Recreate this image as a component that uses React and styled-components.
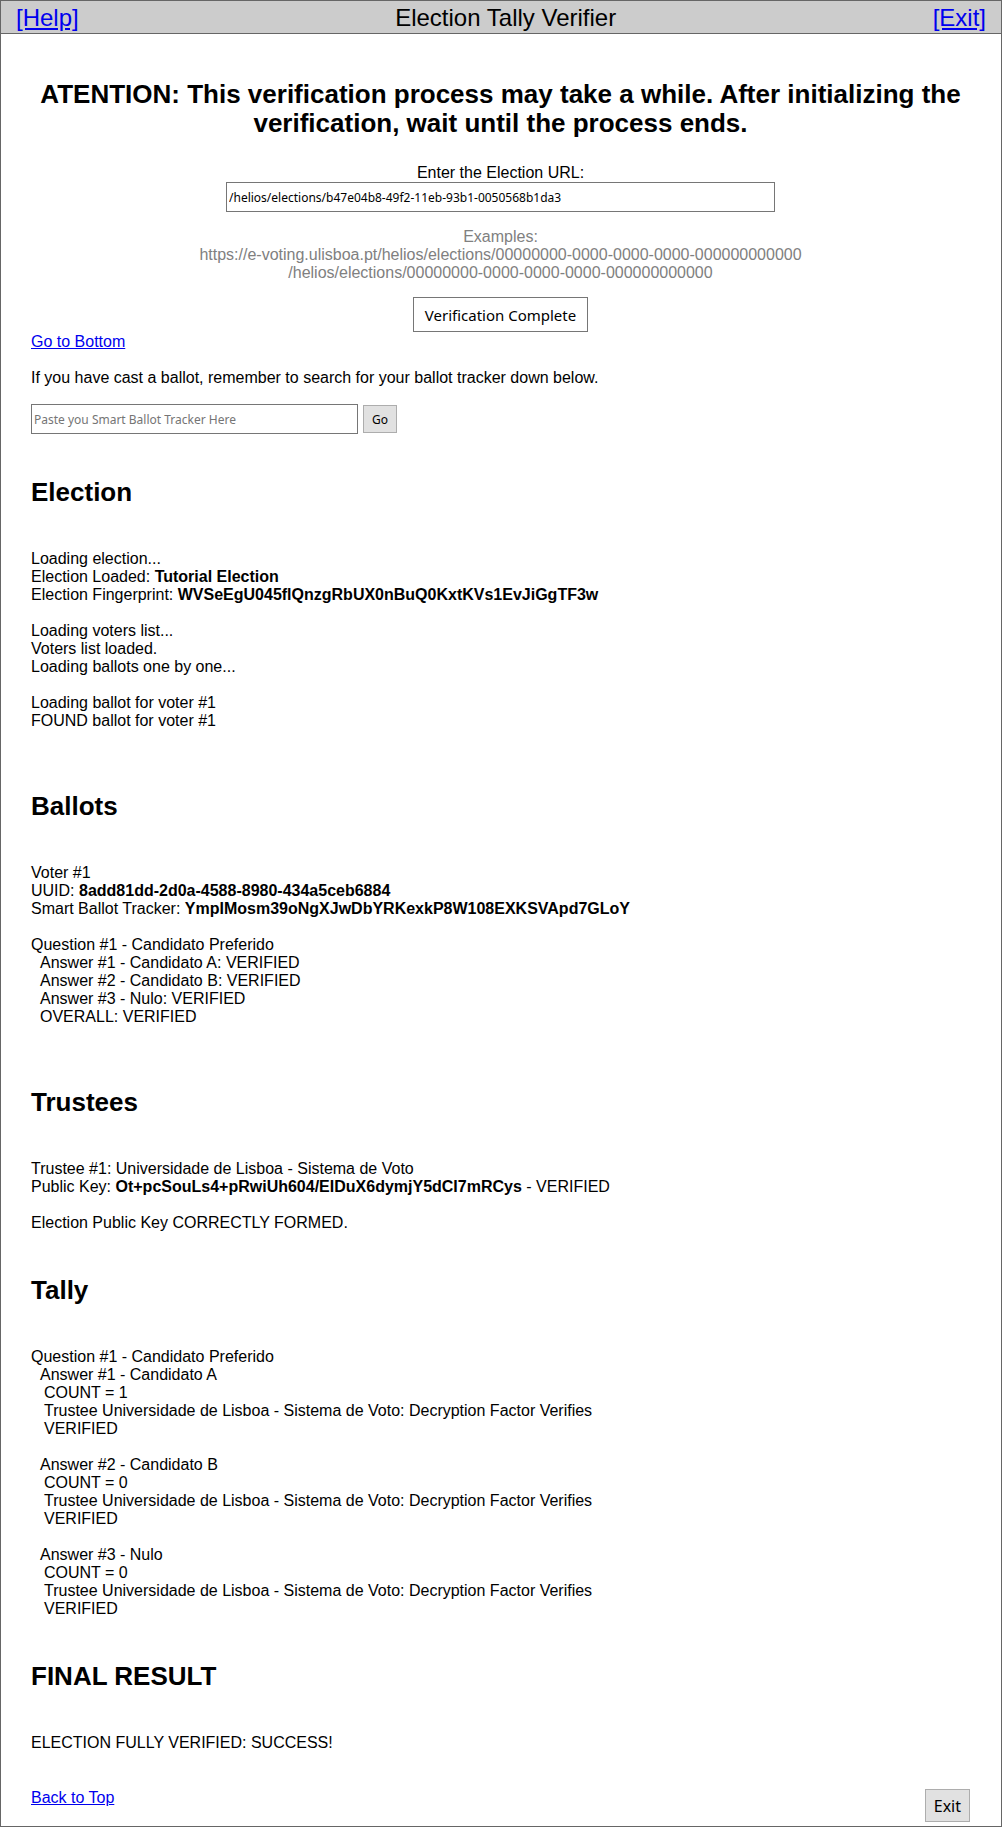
import React from "react";
import styled, { createGlobalStyle } from "styled-components";

const GlobalStyle = createGlobalStyle`
  *, *::before, *::after { box-sizing: border-box; }
  body {
    margin: 0;
    background: #fff;
    color: #000;
    font-family: "Liberation Sans", Arial, sans-serif;
    font-size: 16px;
    line-height: 18px;
  }
`;

const controlFont = `"Noto Sans", Tahoma, sans-serif`;

const Page = styled.div`
  border: 1px solid #666;
`;

const Header = styled.header`
  display: flex;
  justify-content: space-between;
  align-items: center;
  padding: 3px 15px 2px;
  border-bottom: 1px solid #666;
  background: #ccc;
  font-size: 24px;
  line-height: 27px;
`;

const Title = styled.h1`
  margin: 0;
  font-size: inherit;
  font-weight: normal;
`;

const Link = styled.a`
  color: #00e;
  text-decoration: underline;
`;

const Main = styled.main`
  padding: 46px 31px 4px 30px;
`;

const Heading = styled.h2`
  margin: 0;
  font-size: 26px;
  line-height: 29px;
  text-align: ${(p) => (p.$center ? "center" : "left")};
`;

const VerifyForm = styled.form`
  display: flex;
  flex-direction: column;
  align-items: center;
  margin: 26px 0 1px;
`;

const TextBox = styled.input`
  width: ${(p) => p.$width};
  max-width: 100%;
  height: 30px;
  padding: 0 2px;
  border: 1px solid #767676;
  background: #fff;
  color: #000;
  font-family: ${controlFont};
  font-size: 12px;
  &::placeholder { color: #757575; opacity: 1; }
`;

const Examples = styled.p`
  margin: 16px 0 15px;
  color: #808080;
  text-align: center;
`;

const Button = styled.button`
  height: ${(p) => (p.$small ? 28 : 33)}px;
  padding: 0 8px;
  border: 1px solid #adadad;
  background: #e1e1e1;
  color: #000;
  font-family: ${controlFont};
  font-size: ${(p) => (p.$small ? 12 : 16)}px;
`;

const StatusButton = styled(Button)`
  height: 35px;
  padding: 0 11px;
  border-color: #767676;
  background: #fff;
  font-size: 15px;
`;

const Paragraph = styled.p`
  margin: 18px 0 17px;
`;

const TrackerForm = styled.form`
  display: flex;
  align-items: center;
  gap: 5px;
`;

const Section = styled.section`
  margin-top: ${(p) => (p.$wide ? 62 : 44)}px;
`;

const Log = styled.div`
  display: flex;
  flex-direction: column;
  gap: 18px;
  margin-top: 43px;
`;

const Line = styled.div`
  padding-left: ${(p) => [0, 9, 13][p.$level || 0]}px;
`;

const Footer = styled.footer`
  display: flex;
  justify-content: space-between;
  align-items: flex-start;
  margin-top: 37px;
`;

const tally = [
  { name: "Candidato A", count: 1 },
  { name: "Candidato B", count: 0 },
  { name: "Nulo", count: 0 },
];

export default function App() {
  const stop = (e) => e.preventDefault();
  return (
    <>
      <GlobalStyle />
      <Page id="top">
        <Header>
          <Link href="#help">[Help]</Link>
          <Title>Election Tally Verifier</Title>
          <Link href="#exit">[Exit]</Link>
        </Header>
        <Main>
          <Heading $center>
            ATENTION: This verification process may take a while. After
            initializing the verification, wait until the process ends.
          </Heading>
          <VerifyForm onSubmit={stop}>
            <label htmlFor="election-url">Enter the Election URL:</label>
            <TextBox
              id="election-url"
              type="text"
              $width="549px"
              defaultValue="/helios/elections/b47e04b8-49f2-11eb-93b1-0050568b1da3"
            />
            <Examples>
              Examples:
              <br />
              https://e-voting.ulisboa.pt/helios/elections/00000000-0000-0000-0000-000000000000
              <br />
              /helios/elections/00000000-0000-0000-0000-000000000000
            </Examples>
            <StatusButton type="submit">Verification Complete</StatusButton>
          </VerifyForm>
          <Link href="#bottom">Go to Bottom</Link>
          <Paragraph>
            If you have cast a ballot, remember to search for your ballot
            tracker down below.
          </Paragraph>
          <TrackerForm onSubmit={stop}>
            <TextBox
              type="text"
              $width="327px"
              aria-label="Smart Ballot Tracker"
              placeholder="Paste you Smart Ballot Tracker Here"
            />
            <Button type="submit" $small>Go</Button>
          </TrackerForm>

          <Section>
            <Heading>Election</Heading>
            <Log>
              <div>
                <Line>Loading election...</Line>
                <Line>Election Loaded: <b>Tutorial Election</b></Line>
                <Line>
                  Election Fingerprint:{" "}
                  <b>WVSeEgU045flQnzgRbUX0nBuQ0KxtKVs1EvJiGgTF3w</b>
                </Line>
              </div>
              <div>
                <Line>Loading voters list...</Line>
                <Line>Voters list loaded.</Line>
                <Line>Loading ballots one by one...</Line>
              </div>
              <div>
                <Line>Loading ballot for voter #1</Line>
                <Line>FOUND ballot for voter #1</Line>
              </div>
            </Log>
          </Section>

          <Section $wide>
            <Heading>Ballots</Heading>
            <Log>
              <div>
                <Line>Voter #1</Line>
                <Line>UUID: <b>8add81dd-2d0a-4588-8980-434a5ceb6884</b></Line>
                <Line>
                  Smart Ballot Tracker:{" "}
                  <b>YmpIMosm39oNgXJwDbYRKexkP8W108EXKSVApd7GLoY</b>
                </Line>
              </div>
              <div>
                <Line>Question #1 - Candidato Preferido</Line>
                {tally.map((a, i) => (
                  <Line $level={1} key={a.name}>
                    {`Answer #${i + 1} - ${a.name}: VERIFIED`}
                  </Line>
                ))}
                <Line $level={1}>OVERALL: VERIFIED</Line>
              </div>
            </Log>
          </Section>

          <Section $wide>
            <Heading>Trustees</Heading>
            <Log>
              <div>
                <Line>Trustee #1: Universidade de Lisboa - Sistema de Voto</Line>
                <Line>
                  Public Key:{" "}
                  <b>Ot+pcSouLs4+pRwiUh604/EIDuX6dymjY5dCI7mRCys</b> - VERIFIED
                </Line>
              </div>
              <Line>Election Public Key CORRECTLY FORMED.</Line>
            </Log>
          </Section>

          <Section>
            <Heading>Tally</Heading>
            <Log>
              {tally.map((a, i) => (
                <div key={a.name}>
                  {i === 0 && <Line>Question #1 - Candidato Preferido</Line>}
                  <Line $level={1}>{`Answer #${i + 1} - ${a.name}`}</Line>
                  <Line $level={2}>{`COUNT = ${a.count}`}</Line>
                  <Line $level={2}>
                    Trustee Universidade de Lisboa - Sistema de Voto: Decryption
                    Factor Verifies
                  </Line>
                  <Line $level={2}>VERIFIED</Line>
                </div>
              ))}
            </Log>
          </Section>

          <Section>
            <Heading>FINAL RESULT</Heading>
            <Log>
              <Line>ELECTION FULLY VERIFIED: SUCCESS!</Line>
            </Log>
          </Section>

          <Footer id="bottom">
            <Link href="#top">Back to Top</Link>
            <Button type="button">Exit</Button>
          </Footer>
        </Main>
      </Page>
    </>
  );
}
